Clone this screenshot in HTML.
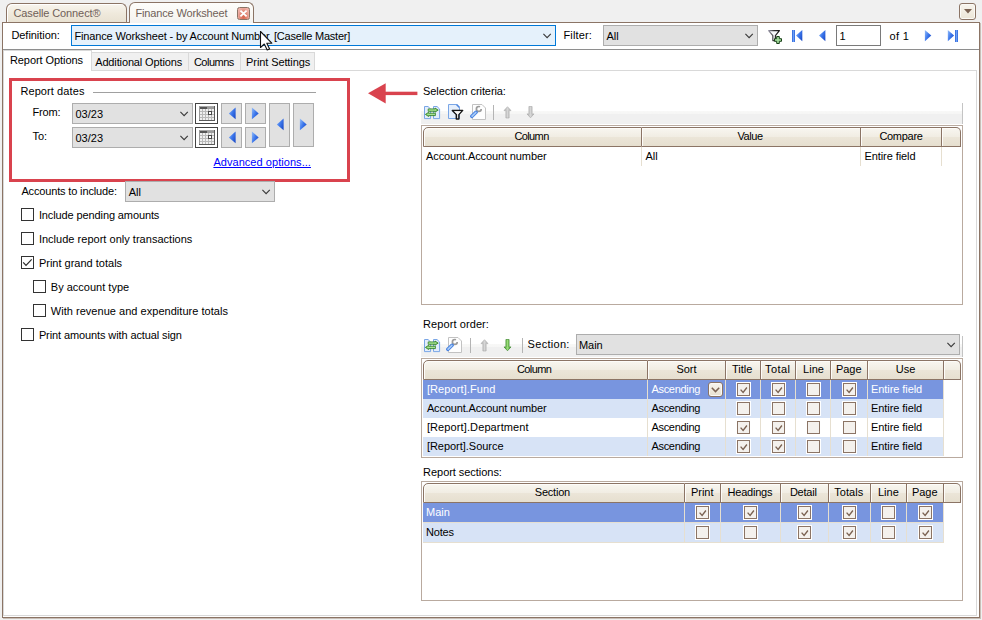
<!DOCTYPE html>
<html><head><meta charset="utf-8">
<style>
*{box-sizing:border-box;margin:0;padding:0}
html,body{width:982px;height:620px;overflow:hidden;background:#f0f0f0}
body{font-family:"Liberation Sans",sans-serif;font-size:11px;color:#000;position:relative}
.a{position:absolute}
.t{position:absolute;white-space:nowrap;line-height:13px;height:13px}
.combo{position:absolute;background:#e1e1e1;border:1px solid #adadad}
.cb{position:absolute;width:13px;height:13px;border:1px solid #333;background:#fff}
.btn{position:absolute;background:#e1e1e1;border:1px solid #adadad}
.tbl{position:absolute;border:1px solid #b9aa9f;background:#fff}
.hd{position:absolute;height:20px;border:1px solid #8b7465;border-left:none;background:linear-gradient(#f8f6f0,#f1ede3 48%,#ebe5d8 52%,#e6dfcf);box-shadow:inset 1px 1px 0 #fdfcf9}
.hd.first{border-left:1px solid #8b7465;border-top-left-radius:5px}
.hd.last{border-top-right-radius:5px}
.tcb{position:absolute;width:15px;height:15px;border:1px solid #fff;background:#8b7465;padding:1px}
.tcb i{display:block;width:11px;height:11px;background:#f4f1ed}
.tb{position:absolute;background:linear-gradient(#ffffff 0,#ffffff 36%,#f8f8f7 38%,#f6f6f5 52%,#f0f0f0 54%,#f0f0f0 100%)}
</style></head><body>
<div class="a" style="left:6px;top:3px;width:121px;height:20px;border:1px solid #8b7465;border-bottom:none;border-radius:6px 6px 0 0;background:linear-gradient(#f8f5ee,#efe9dc 50%,#e8e1d1);box-shadow:inset 1px 1px 0 #fff"></div>
<div class="t" style="left:13.4px;top:7px;letter-spacing:-0.109px;color:#6f6058">Caselle Connect®</div>
<div class="a" style="left:2px;top:22px;width:978px;height:596px;border:1px solid #8b7465;background:#fff"></div>
<div class="a" style="left:980px;top:23px;width:1px;height:596px;background:#c9bfb8"></div>
<div class="a" style="left:3px;top:618px;width:978px;height:1px;background:#c9bfb8"></div>
<div class="a" style="left:129px;top:2px;width:125px;height:21px;border:1px solid #8b7465;border-bottom:none;border-radius:6px 6px 0 0;background:linear-gradient(#fdfdfb,#f8f6f2 70%,#f2f2f1)"></div>
<div class="t" style="left:135.4px;top:7px;letter-spacing:-0.149px;color:#6f6058">Finance Worksheet</div>
<div class="a" style="left:237px;top:7px;width:13px;height:13px;border:1px solid #8b7465;border-radius:2.5px;background:radial-gradient(ellipse at 50% 85%,#d9664c 0,#e08a78 45%,#eeb0a6 75%)"><svg class="a" style="left:1px;top:1px" width="9" height="9" viewBox="0 0 9 9"><path d="M1.4 1.6L7.6 7.4M7.6 1.6L1.4 7.4" stroke="#fff" stroke-width="1.9"/></svg></div>
<div class="a" style="left:959px;top:3px;width:17px;height:17px;border:1px solid #8b7465;border-radius:3px;background:linear-gradient(#f8f5ee,#ebe5d7);box-shadow:inset 0 0 0 1px #fbfaf6"><svg class="a" style="left:4px;top:5px" width="8" height="5" viewBox="0 0 8 5"><polygon points="0,0 8,0 4,4.6" fill="#7a6252"/></svg></div>
<div class="t" style="left:11.4px;top:29px;letter-spacing:-0.042px;">Definition:</div>
<div class="combo" style="left:71px;top:25px;width:485px;height:21px;background:#e5f1fb;border:1px solid #0078d7"></div>
<div class="t" style="left:74.4px;top:30px;letter-spacing:-0.140px;">Finance Worksheet - by Account Number</div>
<div class="t" style="left:274.0px;top:30px;letter-spacing:-0.206px;">[Caselle Master]</div>
<svg class="a" style="left:543px;top:33px" width="9" height="7" viewBox="0 0 9 7"><path d="M0.4 0.9 L4.1 4.6 L7.8 0.9" fill="none" stroke="#3a3a3a" stroke-width="1.15"/></svg>
<div class="t" style="left:563.4px;top:29px;letter-spacing:0.167px;">Filter:</div>
<div class="combo" style="left:603px;top:25px;width:155px;height:21px;"></div>
<div class="t" style="left:606.4px;top:30px;">All</div>
<svg class="a" style="left:745px;top:33px" width="9" height="7" viewBox="0 0 9 7"><path d="M0.4 0.9 L4.1 4.6 L7.8 0.9" fill="none" stroke="#3a3a3a" stroke-width="1.15"/></svg>
<div class="a" style="left:3px;top:49px;width:976px;height:1px;background:#8e8e8e"></div>
<div class="a" style="left:836px;top:25px;width:45px;height:21px;border:1px solid #7a7a7a;background:#fff"></div>
<div class="t" style="left:839.4px;top:30px;">1</div>
<div class="t" style="left:889.4px;top:30px;letter-spacing:0.4px">of 1</div>
<svg class="a" style="left:819px;top:29px" width="8" height="14" viewBox="0 0 8 14"><defs><linearGradient id="g1" x1="0" y1="0.1" x2="1" y2="0.8"><stop offset="0" stop-color="#8fb9f8"/><stop offset="0.5" stop-color="#3d78ec"/><stop offset="1" stop-color="#1c4cc8"/></linearGradient></defs><polygon points="6.40,0.90 0.00,6.60 6.40,12.30" fill="url(#g1)"/></svg>
<svg class="a" style="left:924px;top:29px" width="9" height="14" viewBox="0 0 9 14"><defs><linearGradient id="g2" x1="0" y1="0.1" x2="1" y2="0.8"><stop offset="0" stop-color="#8fb9f8"/><stop offset="0.5" stop-color="#3d78ec"/><stop offset="1" stop-color="#1c4cc8"/></linearGradient></defs><polygon points="0.90,0.90 7.30,6.60 0.90,12.30" fill="url(#g2)"/></svg>
<svg class="a" style="left:796px;top:29px" width="8" height="14" viewBox="0 0 8 14"><defs><linearGradient id="g3" x1="0" y1="0.1" x2="1" y2="0.8"><stop offset="0" stop-color="#8fb9f8"/><stop offset="0.5" stop-color="#3d78ec"/><stop offset="1" stop-color="#1c4cc8"/></linearGradient></defs><polygon points="6.30,0.90 0.00,6.60 6.30,12.30" fill="url(#g3)"/></svg>
<div class="a" style="left:792px;top:30px;width:3px;height:12px;background:linear-gradient(90deg,#2a5fd8,#6aa0f5 50%,#2a5fd8)"></div>
<svg class="a" style="left:947px;top:29px" width="9" height="14" viewBox="0 0 9 14"><defs><linearGradient id="g4" x1="0" y1="0.1" x2="1" y2="0.8"><stop offset="0" stop-color="#8fb9f8"/><stop offset="0.5" stop-color="#3d78ec"/><stop offset="1" stop-color="#1c4cc8"/></linearGradient></defs><polygon points="0.80,0.90 7.10,6.60 0.80,12.30" fill="url(#g4)"/></svg>
<div class="a" style="left:955px;top:30px;width:3px;height:12px;background:linear-gradient(90deg,#2a5fd8,#6aa0f5 50%,#2a5fd8)"></div>
<svg class="a" style="left:767px;top:29px" width="17" height="17" viewBox="0 0 17 17"><defs><linearGradient id="fg" x1="0" y1="0" x2="1" y2="0"><stop offset="0" stop-color="#9a98a8"/><stop offset="0.5" stop-color="#333"/><stop offset="1" stop-color="#111"/></linearGradient></defs><path d="M1.6 1.6 H12.4 L8.4 6.6 V11.6 H5.8 V6.6 Z" fill="#f6f7fa" stroke="url(#fg)" stroke-width="1.2" stroke-linejoin="round"/><path d="M9.7 7.5 H12.3 V9.7 H14.5 V12.3 H12.3 V14.5 H9.7 V12.3 H7.5 V9.7 H9.7 Z" fill="#a3dc9c" stroke="#173f17" stroke-width="1"/></svg>
<div class="a" style="left:3px;top:70px;width:974px;height:546px;border:1px solid #d9d9d9;background:#fff"></div>
<div class="a" style="left:3px;top:50px;width:89px;height:21px;border:1px solid #d9d9d9;border-bottom:none;background:#fff"></div>
<div class="t" style="left:9.9px;top:54px;letter-spacing:-0.060px;">Report Options</div>
<div class="a" style="left:92px;top:52px;width:97px;height:18px;border:1px solid #d9d9d9;border-bottom:none;border-left:none;background:#f0f0f0"></div>
<div class="t" style="left:95.2px;top:56px;letter-spacing:-0.134px;">Additional Options</div>
<div class="a" style="left:189px;top:52px;width:52px;height:18px;border:1px solid #d9d9d9;border-bottom:none;border-left:none;background:#f0f0f0"></div>
<div class="t" style="left:193.9px;top:56px;letter-spacing:-0.501px;">Columns</div>
<div class="a" style="left:241px;top:52px;width:74px;height:18px;border:1px solid #d9d9d9;border-bottom:none;border-left:none;background:#f0f0f0"></div>
<div class="t" style="left:246.1px;top:56px;letter-spacing:-0.102px;">Print Settings</div>
<div class="a" style="left:9px;top:78px;width:341px;height:104px;border:3px solid #d9434e"></div>
<div class="t" style="left:20.4px;top:85px;letter-spacing:0.092px;">Report dates</div>
<div class="a" style="left:93px;top:92px;width:223px;height:1px;background:#a0a0a0"></div>
<div class="t" style="left:32.4px;top:106px;letter-spacing:-0.134px;">From:</div>
<div class="t" style="left:32.4px;top:130px;">To:</div>
<div class="combo" style="left:72px;top:103px;width:121px;height:21px;"></div>
<div class="t" style="left:75.4px;top:108px;letter-spacing:0.042px;">03/23</div>
<svg class="a" style="left:180px;top:111px" width="9" height="7" viewBox="0 0 9 7"><path d="M0.4 0.9 L4.1 4.6 L7.8 0.9" fill="none" stroke="#3a3a3a" stroke-width="1.15"/></svg>
<div class="combo" style="left:72px;top:127px;width:121px;height:21px;"></div>
<div class="t" style="left:75.4px;top:132px;letter-spacing:0.042px;">03/23</div>
<svg class="a" style="left:180px;top:135px" width="9" height="7" viewBox="0 0 9 7"><path d="M0.4 0.9 L4.1 4.6 L7.8 0.9" fill="none" stroke="#3a3a3a" stroke-width="1.15"/></svg>
<div class="a" style="left:195px;top:103px;width:23px;height:21px;border:1px solid #444;background:#fff"><svg class="a" style="left:3px;top:2px" width="16" height="15" viewBox="0 0 16 15" shape-rendering="crispEdges"><rect x="0" y="0" width="16" height="15" fill="#b9b9b9"/><rect x="0" y="0" width="16" height="1" fill="#a8a8a8"/><rect x="0" y="0" width="1" height="15" fill="#9a9a9a"/><rect x="1" y="1" width="7" height="2" fill="#555"/><rect x="8" y="1" width="7" height="2" fill="#9b9b9b"/><rect x="15" y="0" width="1" height="15" fill="#5a5a5a"/><rect x="0" y="14" width="16" height="1" fill="#5a5a5a"/><g fill="#efefef"><rect x="1" y="3" width="2" height="2"/><rect x="4" y="3" width="2" height="2"/><rect x="7" y="3" width="2" height="2"/><rect x="10" y="3" width="2" height="2"/><rect x="13" y="3" width="2" height="2"/><rect x="1" y="6" width="2" height="2"/><rect x="4" y="6" width="2" height="2"/><rect x="7" y="6" width="2" height="2"/><rect x="10" y="6" width="2" height="2"/><rect x="13" y="6" width="2" height="2"/><rect x="1" y="9" width="2" height="2"/><rect x="4" y="9" width="2" height="2"/><rect x="7" y="9" width="2" height="2"/><rect x="10" y="9" width="2" height="2"/><rect x="13" y="9" width="2" height="2"/><rect x="1" y="12" width="2" height="2"/><rect x="4" y="12" width="2" height="2"/><rect x="7" y="12" width="2" height="2"/><rect x="10" y="12" width="2" height="2"/><rect x="13" y="12" width="2" height="2"/></g><rect x="9" y="5" width="4" height="4" fill="#4a4a4a"/><rect x="10" y="6" width="2" height="2" fill="#fff"/></svg></div>
<div class="a" style="left:195px;top:127px;width:23px;height:21px;border:1px solid #444;background:#fff"><svg class="a" style="left:3px;top:2px" width="16" height="15" viewBox="0 0 16 15" shape-rendering="crispEdges"><rect x="0" y="0" width="16" height="15" fill="#b9b9b9"/><rect x="0" y="0" width="16" height="1" fill="#a8a8a8"/><rect x="0" y="0" width="1" height="15" fill="#9a9a9a"/><rect x="1" y="1" width="7" height="2" fill="#555"/><rect x="8" y="1" width="7" height="2" fill="#9b9b9b"/><rect x="15" y="0" width="1" height="15" fill="#5a5a5a"/><rect x="0" y="14" width="16" height="1" fill="#5a5a5a"/><g fill="#efefef"><rect x="1" y="3" width="2" height="2"/><rect x="4" y="3" width="2" height="2"/><rect x="7" y="3" width="2" height="2"/><rect x="10" y="3" width="2" height="2"/><rect x="13" y="3" width="2" height="2"/><rect x="1" y="6" width="2" height="2"/><rect x="4" y="6" width="2" height="2"/><rect x="7" y="6" width="2" height="2"/><rect x="10" y="6" width="2" height="2"/><rect x="13" y="6" width="2" height="2"/><rect x="1" y="9" width="2" height="2"/><rect x="4" y="9" width="2" height="2"/><rect x="7" y="9" width="2" height="2"/><rect x="10" y="9" width="2" height="2"/><rect x="13" y="9" width="2" height="2"/><rect x="1" y="12" width="2" height="2"/><rect x="4" y="12" width="2" height="2"/><rect x="7" y="12" width="2" height="2"/><rect x="10" y="12" width="2" height="2"/><rect x="13" y="12" width="2" height="2"/></g><rect x="9" y="5" width="4" height="4" fill="#4a4a4a"/><rect x="10" y="6" width="2" height="2" fill="#fff"/></svg></div>
<div class="btn" style="left:221px;top:103px;width:21px;height:21px"></div>
<svg class="a" style="left:228px;top:107px" width="9" height="14" viewBox="0 0 9 14"><defs><linearGradient id="g5" x1="0" y1="0.1" x2="1" y2="0.8"><stop offset="0" stop-color="#8fb9f8"/><stop offset="0.5" stop-color="#3d78ec"/><stop offset="1" stop-color="#1c4cc8"/></linearGradient></defs><polygon points="7.60,0.50 0.80,6.40 7.60,12.30" fill="url(#g5)"/></svg>
<div class="btn" style="left:245px;top:103px;width:21px;height:21px"></div>
<svg class="a" style="left:251px;top:107px" width="9" height="14" viewBox="0 0 9 14"><defs><linearGradient id="g6" x1="0" y1="0.1" x2="1" y2="0.8"><stop offset="0" stop-color="#8fb9f8"/><stop offset="0.5" stop-color="#3d78ec"/><stop offset="1" stop-color="#1c4cc8"/></linearGradient></defs><polygon points="0.90,0.50 7.70,6.40 0.90,12.30" fill="url(#g6)"/></svg>
<div class="btn" style="left:221px;top:127px;width:21px;height:21px"></div>
<svg class="a" style="left:228px;top:131px" width="9" height="14" viewBox="0 0 9 14"><defs><linearGradient id="g7" x1="0" y1="0.1" x2="1" y2="0.8"><stop offset="0" stop-color="#8fb9f8"/><stop offset="0.5" stop-color="#3d78ec"/><stop offset="1" stop-color="#1c4cc8"/></linearGradient></defs><polygon points="7.60,0.50 0.80,6.40 7.60,12.30" fill="url(#g7)"/></svg>
<div class="btn" style="left:245px;top:127px;width:21px;height:21px"></div>
<svg class="a" style="left:251px;top:131px" width="9" height="14" viewBox="0 0 9 14"><defs><linearGradient id="g8" x1="0" y1="0.1" x2="1" y2="0.8"><stop offset="0" stop-color="#8fb9f8"/><stop offset="0.5" stop-color="#3d78ec"/><stop offset="1" stop-color="#1c4cc8"/></linearGradient></defs><polygon points="0.90,0.50 7.70,6.40 0.90,12.30" fill="url(#g8)"/></svg>
<div class="btn" style="left:269px;top:103px;width:21px;height:44px"></div>
<svg class="a" style="left:276px;top:118px" width="9" height="14" viewBox="0 0 9 14"><defs><linearGradient id="g9" x1="0" y1="0.1" x2="1" y2="0.8"><stop offset="0" stop-color="#8fb9f8"/><stop offset="0.5" stop-color="#3d78ec"/><stop offset="1" stop-color="#1c4cc8"/></linearGradient></defs><polygon points="7.60,0.50 0.80,6.40 7.60,12.30" fill="url(#g9)"/></svg>
<div class="btn" style="left:293px;top:103px;width:21px;height:44px"></div>
<svg class="a" style="left:299px;top:118px" width="9" height="14" viewBox="0 0 9 14"><defs><linearGradient id="g10" x1="0" y1="0.1" x2="1" y2="0.8"><stop offset="0" stop-color="#8fb9f8"/><stop offset="0.5" stop-color="#3d78ec"/><stop offset="1" stop-color="#1c4cc8"/></linearGradient></defs><polygon points="0.90,0.50 7.70,6.40 0.90,12.30" fill="url(#g10)"/></svg>
<div class="t" style="left:213.4px;top:156px;letter-spacing:0.049px;color:#0000ff;text-decoration:underline">Advanced options...</div>
<svg class="a" style="left:367px;top:82px" width="53" height="24" viewBox="0 0 53 24"><polygon points="1,11.3 18.7,1.2 18.7,21.5" fill="#d9434e"/><rect x="18" y="9.7" width="32.4" height="3.4" fill="#d9434e"/></svg>
<div class="t" style="left:21.4px;top:185px;letter-spacing:-0.150px;">Accounts to include:</div>
<div class="combo" style="left:125px;top:181px;width:150px;height:21px;"></div>
<div class="t" style="left:128.7px;top:186px;">All</div>
<svg class="a" style="left:262px;top:189px" width="9" height="7" viewBox="0 0 9 7"><path d="M0.4 0.9 L4.1 4.6 L7.8 0.9" fill="none" stroke="#3a3a3a" stroke-width="1.15"/></svg>
<div class="cb" style="left:21px;top:208px"></div>
<div class="t" style="left:38.9px;top:209px;letter-spacing:-0.111px;">Include pending amounts</div>
<div class="cb" style="left:21px;top:232px"></div>
<div class="t" style="left:38.9px;top:233px;letter-spacing:0.020px;">Include report only transactions</div>
<div class="cb" style="left:21px;top:256px"><svg class="a" style="left:0;top:0" width="11" height="11" viewBox="0 0 11 11"><path d="M1.2 5.3 L4 8.3 L9.7 2.4" fill="none" stroke="#2a2a2a" stroke-width="1.2"/></svg></div>
<div class="t" style="left:38.9px;top:257px;letter-spacing:0.003px;">Print grand totals</div>
<div class="cb" style="left:33px;top:280px"></div>
<div class="t" style="left:50.8px;top:281px;letter-spacing:0.008px;">By account type</div>
<div class="cb" style="left:33px;top:304px"></div>
<div class="t" style="left:50.8px;top:305px;letter-spacing:0.029px;">With revenue and expenditure totals</div>
<div class="cb" style="left:21px;top:328px"></div>
<div class="t" style="left:38.9px;top:329px;letter-spacing:-0.108px;">Print amounts with actual sign</div>
<div class="t" style="left:423.1px;top:85px;letter-spacing:-0.087px;">Selection criteria:</div>
<div class="tb" style="left:421px;top:103px;width:542px;height:21px"></div>
<div class="a" style="left:962px;top:103px;width:1px;height:21px;background:#c4c4c4"></div>
<svg class="a" style="left:424px;top:106px" width="17" height="14" viewBox="0 0 17 14"><path d="M0.5 0.5 H4 L6.6 3 V12.6 H0.5 Z" fill="#e3edfb" stroke="#7aa6e6"/><path d="M9.5 0.5 H13 L15.6 3 V12.6 H9.5 Z" fill="#e3edfb" stroke="#7aa6e6"/><path d="M4.2 2.9 H11 V2 L14.2 4.1 L11 6.2 V5.3 H4.2 Z" fill="#7bcb63" stroke="#2f7a22" stroke-width="0.8" stroke-linejoin="round"/><path d="M4.6 4.1 H12.2" stroke="#c6efb4" stroke-width="0.7"/><path d="M11.4 7.2 H4.6 V6.3 L1.4 8.4 L4.6 10.5 V9.6 H11.4 Z" fill="#7bcb63" stroke="#2f7a22" stroke-width="0.8" stroke-linejoin="round"/><path d="M3.4 8.4 H11" stroke="#c6efb4" stroke-width="0.7"/></svg>
<svg class="a" style="left:448px;top:104px" width="16" height="16" viewBox="0 0 16 16"><path d="M0.5 0.5 H8.5 L11.5 3.5 V14.5 H0.5 Z" fill="#e6effb" stroke="#7aa6e6"/><path d="M8.5 0.5 L11.5 3.5" stroke="#4f86de" stroke-width="1.6"/><path d="M4.3 6.4 H14.7 L10.9 10.6 V15 H8.3 V10.6 Z" fill="#d9d9d9" stroke="#151515" stroke-width="1.4" stroke-linejoin="round"/><path d="M6.3 7.6 H12.6 L9.6 10.4 Z" fill="#fafafa"/></svg>
<svg class="a" style="left:470px;top:104px" width="17" height="16" viewBox="0 0 17 16"><path d="M2.5 0.5 H12 L15.5 4 V15.5 H2.5 Z" fill="#fefefe" stroke="#c2c2c2"/><path d="M7.4 6.8 L6.2 8.1" stroke="#a5a5a5" stroke-width="2.4"/><circle cx="8.8" cy="4.9" r="2.4" fill="none" stroke="#9c9c9c" stroke-width="1.7" stroke-dasharray="11.3 3.8"/><path d="M1.9 12.3 L6 8.3" stroke="#4a84e2" stroke-width="3.6" stroke-linecap="round"/><path d="M2.1 12.1 L5.8 8.5" stroke="#a9cbf6" stroke-width="1.7" stroke-linecap="round"/></svg>
<div class="a" style="left:493px;top:105px;width:1px;height:15px;background:#b4b4b4"></div>
<svg class="a" style="left:503px;top:106px" width="9" height="13" viewBox="0 0 9 13"><defs><linearGradient id="g11" x1="0" y1="0" x2="1" y2="0"><stop offset="0" stop-color="#b0b0b0"/><stop offset="0.5" stop-color="#d6d6d6"/><stop offset="1" stop-color="#b0b0b0"/></linearGradient></defs><path d="M4.5 0.7 L8 4.6 H6.1 V12 H2.9 V4.6 H1 Z" fill="url(#g11)" stroke="#a8a8a8" stroke-width="0.6"/></svg>
<svg class="a" style="left:526px;top:106px" width="9" height="13" viewBox="0 0 9 13"><defs><linearGradient id="g12" x1="0" y1="0" x2="1" y2="0"><stop offset="0" stop-color="#b0b0b0"/><stop offset="0.5" stop-color="#d6d6d6"/><stop offset="1" stop-color="#b0b0b0"/></linearGradient></defs><path d="M2.9 0.5 H6.1 V7.9 H8 L4.5 11.8 L1 7.9 H2.9 Z" fill="url(#g12)" stroke="#a8a8a8" stroke-width="0.6"/></svg>
<div class="tbl" style="left:421px;top:125px;width:542px;height:180px"></div>
<div class="hd first" style="left:423px;top:127px;width:219px"></div>
<div class="t" style="left:514.4px;top:130px;letter-spacing:-0.600px;">Column</div>
<div class="hd" style="left:642px;top:127px;width:219px"></div>
<div class="t" style="left:737.4px;top:130px;letter-spacing:-0.382px;">Value</div>
<div class="hd" style="left:861px;top:127px;width:81px"></div>
<div class="t" style="left:879.4px;top:130px;letter-spacing:-0.292px;">Compare</div>
<div class="hd last" style="left:942px;top:127px;width:19px"></div>
<div class="t" style="left:426.1px;top:150px;letter-spacing:-0.115px;">Account.Account number</div>
<div class="t" style="left:645.4px;top:150px;">All</div>
<div class="t" style="left:864.4px;top:150px;letter-spacing:-0.071px;">Entire field</div>
<div class="a" style="left:641px;top:147px;width:1px;height:19px;background:#e6dfd0"></div>
<div class="a" style="left:860px;top:147px;width:1px;height:19px;background:#e6dfd0"></div>
<div class="a" style="left:941px;top:147px;width:1px;height:19px;background:#e6dfd0"></div>
<div class="t" style="left:423.1px;top:318px;letter-spacing:0.082px;">Report order:</div>
<div class="tb" style="left:421px;top:336px;width:542px;height:21px"></div>
<div class="a" style="left:962px;top:336px;width:1px;height:21px;background:#c4c4c4"></div>
<svg class="a" style="left:424px;top:339px" width="17" height="14" viewBox="0 0 17 14"><path d="M0.5 0.5 H4 L6.6 3 V12.6 H0.5 Z" fill="#e3edfb" stroke="#7aa6e6"/><path d="M9.5 0.5 H13 L15.6 3 V12.6 H9.5 Z" fill="#e3edfb" stroke="#7aa6e6"/><path d="M4.2 2.9 H11 V2 L14.2 4.1 L11 6.2 V5.3 H4.2 Z" fill="#7bcb63" stroke="#2f7a22" stroke-width="0.8" stroke-linejoin="round"/><path d="M4.6 4.1 H12.2" stroke="#c6efb4" stroke-width="0.7"/><path d="M11.4 7.2 H4.6 V6.3 L1.4 8.4 L4.6 10.5 V9.6 H11.4 Z" fill="#7bcb63" stroke="#2f7a22" stroke-width="0.8" stroke-linejoin="round"/><path d="M3.4 8.4 H11" stroke="#c6efb4" stroke-width="0.7"/></svg>
<svg class="a" style="left:446px;top:337px" width="17" height="16" viewBox="0 0 17 16"><path d="M2.5 0.5 H12 L15.5 4 V15.5 H2.5 Z" fill="#fefefe" stroke="#c2c2c2"/><path d="M7.4 6.8 L6.2 8.1" stroke="#a5a5a5" stroke-width="2.4"/><circle cx="8.8" cy="4.9" r="2.4" fill="none" stroke="#9c9c9c" stroke-width="1.7" stroke-dasharray="11.3 3.8"/><path d="M1.9 12.3 L6 8.3" stroke="#4a84e2" stroke-width="3.6" stroke-linecap="round"/><path d="M2.1 12.1 L5.8 8.5" stroke="#a9cbf6" stroke-width="1.7" stroke-linecap="round"/></svg>
<div class="a" style="left:470px;top:338px;width:1px;height:15px;background:#b4b4b4"></div>
<svg class="a" style="left:480px;top:339px" width="9" height="13" viewBox="0 0 9 13"><defs><linearGradient id="g13" x1="0" y1="0" x2="1" y2="0"><stop offset="0" stop-color="#b0b0b0"/><stop offset="0.5" stop-color="#d6d6d6"/><stop offset="1" stop-color="#b0b0b0"/></linearGradient></defs><path d="M4.5 0.7 L8 4.6 H6.1 V12 H2.9 V4.6 H1 Z" fill="url(#g13)" stroke="#a8a8a8" stroke-width="0.6"/></svg>
<svg class="a" style="left:503px;top:339px" width="9" height="13" viewBox="0 0 9 13"><defs><linearGradient id="g14" x1="0" y1="0" x2="1" y2="0"><stop offset="0" stop-color="#43a12e"/><stop offset="0.5" stop-color="#9bdc7a"/><stop offset="1" stop-color="#43a12e"/></linearGradient></defs><path d="M2.9 0.5 H6.1 V7.9 H8 L4.5 11.8 L1 7.9 H2.9 Z" fill="url(#g14)" stroke="#2f7d20" stroke-width="0.6"/></svg>
<div class="a" style="left:522px;top:338px;width:1px;height:15px;background:#b4b4b4"></div>
<div class="t" style="left:527.6px;top:338px;letter-spacing:0.293px;">Section:</div>
<div class="combo" style="left:576px;top:334px;width:384px;height:21px;"></div>
<div class="t" style="left:578.9px;top:339px;">Main</div>
<svg class="a" style="left:947px;top:342px" width="9" height="7" viewBox="0 0 9 7"><path d="M0.4 0.9 L4.1 4.6 L7.8 0.9" fill="none" stroke="#3a3a3a" stroke-width="1.15"/></svg>
<div class="tbl" style="left:421px;top:358px;width:542px;height:100px"></div>
<div class="hd first" style="left:423px;top:360px;width:225px"></div>
<div class="t" style="left:516.9px;top:363px;letter-spacing:-0.581px;">Column</div>
<div class="hd" style="left:648px;top:360px;width:78px"></div>
<div class="t" style="left:676.4px;top:363px;">Sort</div>
<div class="hd" style="left:726px;top:360px;width:35px"></div>
<div class="t" style="left:731.9px;top:363px;letter-spacing:0.031px;">Title</div>
<div class="hd" style="left:761px;top:360px;width:35px"></div>
<div class="t" style="left:765.1px;top:363px;letter-spacing:0.387px;">Total</div>
<div class="hd" style="left:796px;top:360px;width:35px"></div>
<div class="t" style="left:803.1px;top:363px;">Line</div>
<div class="hd" style="left:831px;top:360px;width:37px"></div>
<div class="t" style="left:835.9px;top:363px;">Page</div>
<div class="hd" style="left:868px;top:360px;width:76px"></div>
<div class="t" style="left:895.8px;top:363px;">Use</div>
<div class="hd last" style="left:944px;top:360px;width:17px"></div>
<div class="a" style="left:423px;top:380px;width:520px;height:19px;background:#7895df"></div>
<div class="a" style="left:647px;top:380px;width:1px;height:19px;background:#e6dfd0"></div>
<div class="a" style="left:725px;top:380px;width:1px;height:19px;background:#e6dfd0"></div>
<div class="a" style="left:760px;top:380px;width:1px;height:19px;background:#e6dfd0"></div>
<div class="a" style="left:795px;top:380px;width:1px;height:19px;background:#e6dfd0"></div>
<div class="a" style="left:830px;top:380px;width:1px;height:19px;background:#e6dfd0"></div>
<div class="a" style="left:867px;top:380px;width:1px;height:19px;background:#e6dfd0"></div>
<div class="a" style="left:943px;top:380px;width:1px;height:19px;background:#e6dfd0"></div>
<div class="t" style="left:426.9px;top:383px;letter-spacing:0.103px;color:#fff">[Report].Fund</div>
<div class="t" style="left:651.4px;top:383px;letter-spacing:-0.297px;color:#fff">Ascending</div>
<div class="t" style="left:871.0px;top:383px;letter-spacing:-0.071px;color:#fff">Entire field</div>
<div class="tcb" style="left:736px;top:382px"><i></i><svg class="a" style="left:1px;top:1px" width="11" height="11" viewBox="0 0 11 11"><path d="M2.6 5.6 L5.1 8.4 L8.9 3.5" fill="none" stroke="#7a6252" stroke-width="1.35"/></svg></div>
<div class="tcb" style="left:771px;top:382px"><i></i><svg class="a" style="left:1px;top:1px" width="11" height="11" viewBox="0 0 11 11"><path d="M2.6 5.6 L5.1 8.4 L8.9 3.5" fill="none" stroke="#7a6252" stroke-width="1.35"/></svg></div>
<div class="tcb" style="left:806px;top:382px"><i></i></div>
<div class="tcb" style="left:842px;top:382px"><i></i><svg class="a" style="left:1px;top:1px" width="11" height="11" viewBox="0 0 11 11"><path d="M2.6 5.6 L5.1 8.4 L8.9 3.5" fill="none" stroke="#7a6252" stroke-width="1.35"/></svg></div>
<div class="a" style="left:423px;top:399px;width:520px;height:19px;background:#d7e3f6"></div>
<div class="a" style="left:647px;top:399px;width:1px;height:19px;background:#e6dfd0"></div>
<div class="a" style="left:725px;top:399px;width:1px;height:19px;background:#e6dfd0"></div>
<div class="a" style="left:760px;top:399px;width:1px;height:19px;background:#e6dfd0"></div>
<div class="a" style="left:795px;top:399px;width:1px;height:19px;background:#e6dfd0"></div>
<div class="a" style="left:830px;top:399px;width:1px;height:19px;background:#e6dfd0"></div>
<div class="a" style="left:867px;top:399px;width:1px;height:19px;background:#e6dfd0"></div>
<div class="a" style="left:943px;top:399px;width:1px;height:19px;background:#e6dfd0"></div>
<div class="t" style="left:426.9px;top:402px;letter-spacing:-0.153px;color:#000">Account.Account number</div>
<div class="t" style="left:651.4px;top:402px;letter-spacing:-0.297px;color:#000">Ascending</div>
<div class="t" style="left:871.0px;top:402px;letter-spacing:-0.071px;color:#000">Entire field</div>
<div class="tcb" style="left:736px;top:401px"><i></i></div>
<div class="tcb" style="left:771px;top:401px"><i></i></div>
<div class="tcb" style="left:806px;top:401px"><i></i></div>
<div class="tcb" style="left:842px;top:401px"><i></i></div>
<div class="a" style="left:423px;top:418px;width:520px;height:19px;background:#ffffff"></div>
<div class="a" style="left:647px;top:418px;width:1px;height:19px;background:#e6dfd0"></div>
<div class="a" style="left:725px;top:418px;width:1px;height:19px;background:#e6dfd0"></div>
<div class="a" style="left:760px;top:418px;width:1px;height:19px;background:#e6dfd0"></div>
<div class="a" style="left:795px;top:418px;width:1px;height:19px;background:#e6dfd0"></div>
<div class="a" style="left:830px;top:418px;width:1px;height:19px;background:#e6dfd0"></div>
<div class="a" style="left:867px;top:418px;width:1px;height:19px;background:#e6dfd0"></div>
<div class="a" style="left:943px;top:418px;width:1px;height:19px;background:#e6dfd0"></div>
<div class="t" style="left:426.9px;top:421px;letter-spacing:0.114px;color:#000">[Report].Department</div>
<div class="t" style="left:651.4px;top:421px;letter-spacing:-0.297px;color:#000">Ascending</div>
<div class="t" style="left:871.0px;top:421px;letter-spacing:-0.071px;color:#000">Entire field</div>
<div class="tcb" style="left:736px;top:420px"><i></i><svg class="a" style="left:1px;top:1px" width="11" height="11" viewBox="0 0 11 11"><path d="M2.6 5.6 L5.1 8.4 L8.9 3.5" fill="none" stroke="#7a6252" stroke-width="1.35"/></svg></div>
<div class="tcb" style="left:771px;top:420px"><i></i><svg class="a" style="left:1px;top:1px" width="11" height="11" viewBox="0 0 11 11"><path d="M2.6 5.6 L5.1 8.4 L8.9 3.5" fill="none" stroke="#7a6252" stroke-width="1.35"/></svg></div>
<div class="tcb" style="left:806px;top:420px"><i></i></div>
<div class="tcb" style="left:842px;top:420px"><i></i></div>
<div class="a" style="left:423px;top:437px;width:520px;height:19px;background:#d7e3f6"></div>
<div class="a" style="left:647px;top:437px;width:1px;height:19px;background:#e6dfd0"></div>
<div class="a" style="left:725px;top:437px;width:1px;height:19px;background:#e6dfd0"></div>
<div class="a" style="left:760px;top:437px;width:1px;height:19px;background:#e6dfd0"></div>
<div class="a" style="left:795px;top:437px;width:1px;height:19px;background:#e6dfd0"></div>
<div class="a" style="left:830px;top:437px;width:1px;height:19px;background:#e6dfd0"></div>
<div class="a" style="left:867px;top:437px;width:1px;height:19px;background:#e6dfd0"></div>
<div class="a" style="left:943px;top:437px;width:1px;height:19px;background:#e6dfd0"></div>
<div class="t" style="left:426.9px;top:440px;letter-spacing:-0.025px;color:#000">[Report].Source</div>
<div class="t" style="left:651.4px;top:440px;letter-spacing:-0.297px;color:#000">Ascending</div>
<div class="t" style="left:871.0px;top:440px;letter-spacing:-0.071px;color:#000">Entire field</div>
<div class="tcb" style="left:736px;top:439px"><i></i><svg class="a" style="left:1px;top:1px" width="11" height="11" viewBox="0 0 11 11"><path d="M2.6 5.6 L5.1 8.4 L8.9 3.5" fill="none" stroke="#7a6252" stroke-width="1.35"/></svg></div>
<div class="tcb" style="left:771px;top:439px"><i></i><svg class="a" style="left:1px;top:1px" width="11" height="11" viewBox="0 0 11 11"><path d="M2.6 5.6 L5.1 8.4 L8.9 3.5" fill="none" stroke="#7a6252" stroke-width="1.35"/></svg></div>
<div class="tcb" style="left:806px;top:439px"><i></i></div>
<div class="tcb" style="left:842px;top:439px"><i></i></div>
<div class="a" style="left:708px;top:382px;width:15px;height:15px;border:1px solid #8b7465;border-radius:3px;background:linear-gradient(#f8f5ee,#e8e1d0);box-shadow:inset 0 0 0 1px #fbfaf6"><svg class="a" style="left:2px;top:4px" width="9" height="6" viewBox="0 0 9 6"><path d="M0.8 0.8L4.5 4.6L8.2 0.8" fill="none" stroke="#7a6252" stroke-width="1.5"/></svg></div>
<div class="t" style="left:423.1px;top:466px;letter-spacing:-0.046px;">Report sections:</div>
<div class="tbl" style="left:421px;top:481px;width:542px;height:120px"></div>
<div class="hd first" style="left:423px;top:483px;width:262px"></div>
<div class="t" style="left:534.8px;top:486px;letter-spacing:-0.217px;">Section</div>
<div class="hd" style="left:685px;top:483px;width:36px"></div>
<div class="t" style="left:690.9px;top:486px;letter-spacing:-0.006px;">Print</div>
<div class="hd" style="left:721px;top:483px;width:60px"></div>
<div class="t" style="left:727.6px;top:486px;letter-spacing:-0.241px;">Headings</div>
<div class="hd" style="left:781px;top:483px;width:48px"></div>
<div class="t" style="left:789.9px;top:486px;letter-spacing:-0.225px;">Detail</div>
<div class="hd" style="left:829px;top:483px;width:42px"></div>
<div class="t" style="left:834.2px;top:486px;letter-spacing:0.050px;">Totals</div>
<div class="hd" style="left:871px;top:483px;width:36px"></div>
<div class="t" style="left:878.0px;top:486px;">Line</div>
<div class="hd" style="left:907px;top:483px;width:37px"></div>
<div class="t" style="left:911.9px;top:486px;">Page</div>
<div class="hd last" style="left:944px;top:483px;width:17px"></div>
<div class="a" style="left:423px;top:503px;width:520px;height:19px;background:#7895df"></div>
<div class="a" style="left:423px;top:522px;width:521px;height:1px;background:#e6dfd0"></div>
<div class="a" style="left:684px;top:503px;width:1px;height:20px;background:#e6dfd0"></div>
<div class="a" style="left:720px;top:503px;width:1px;height:20px;background:#e6dfd0"></div>
<div class="a" style="left:780px;top:503px;width:1px;height:20px;background:#e6dfd0"></div>
<div class="a" style="left:828px;top:503px;width:1px;height:20px;background:#e6dfd0"></div>
<div class="a" style="left:870px;top:503px;width:1px;height:20px;background:#e6dfd0"></div>
<div class="a" style="left:906px;top:503px;width:1px;height:20px;background:#e6dfd0"></div>
<div class="a" style="left:943px;top:503px;width:1px;height:20px;background:#e6dfd0"></div>
<div class="t" style="left:426.0px;top:506px;color:#fff">Main</div>
<div class="tcb" style="left:695px;top:505px"><i></i><svg class="a" style="left:1px;top:1px" width="11" height="11" viewBox="0 0 11 11"><path d="M2.6 5.6 L5.1 8.4 L8.9 3.5" fill="none" stroke="#7a6252" stroke-width="1.35"/></svg></div>
<div class="tcb" style="left:743px;top:505px"><i></i><svg class="a" style="left:1px;top:1px" width="11" height="11" viewBox="0 0 11 11"><path d="M2.6 5.6 L5.1 8.4 L8.9 3.5" fill="none" stroke="#7a6252" stroke-width="1.35"/></svg></div>
<div class="tcb" style="left:797px;top:505px"><i></i><svg class="a" style="left:1px;top:1px" width="11" height="11" viewBox="0 0 11 11"><path d="M2.6 5.6 L5.1 8.4 L8.9 3.5" fill="none" stroke="#7a6252" stroke-width="1.35"/></svg></div>
<div class="tcb" style="left:842px;top:505px"><i></i><svg class="a" style="left:1px;top:1px" width="11" height="11" viewBox="0 0 11 11"><path d="M2.6 5.6 L5.1 8.4 L8.9 3.5" fill="none" stroke="#7a6252" stroke-width="1.35"/></svg></div>
<div class="tcb" style="left:881px;top:505px"><i></i></div>
<div class="tcb" style="left:918px;top:505px"><i></i><svg class="a" style="left:1px;top:1px" width="11" height="11" viewBox="0 0 11 11"><path d="M2.6 5.6 L5.1 8.4 L8.9 3.5" fill="none" stroke="#7a6252" stroke-width="1.35"/></svg></div>
<div class="a" style="left:423px;top:523px;width:520px;height:19px;background:#d7e3f6"></div>
<div class="a" style="left:423px;top:542px;width:521px;height:1px;background:#e6dfd0"></div>
<div class="a" style="left:684px;top:523px;width:1px;height:20px;background:#e6dfd0"></div>
<div class="a" style="left:720px;top:523px;width:1px;height:20px;background:#e6dfd0"></div>
<div class="a" style="left:780px;top:523px;width:1px;height:20px;background:#e6dfd0"></div>
<div class="a" style="left:828px;top:523px;width:1px;height:20px;background:#e6dfd0"></div>
<div class="a" style="left:870px;top:523px;width:1px;height:20px;background:#e6dfd0"></div>
<div class="a" style="left:906px;top:523px;width:1px;height:20px;background:#e6dfd0"></div>
<div class="a" style="left:943px;top:523px;width:1px;height:20px;background:#e6dfd0"></div>
<div class="t" style="left:426.0px;top:526px;letter-spacing:-0.213px;color:#000">Notes</div>
<div class="tcb" style="left:695px;top:525px"><i></i></div>
<div class="tcb" style="left:743px;top:525px"><i></i></div>
<div class="tcb" style="left:797px;top:525px"><i></i><svg class="a" style="left:1px;top:1px" width="11" height="11" viewBox="0 0 11 11"><path d="M2.6 5.6 L5.1 8.4 L8.9 3.5" fill="none" stroke="#7a6252" stroke-width="1.35"/></svg></div>
<div class="tcb" style="left:842px;top:525px"><i></i><svg class="a" style="left:1px;top:1px" width="11" height="11" viewBox="0 0 11 11"><path d="M2.6 5.6 L5.1 8.4 L8.9 3.5" fill="none" stroke="#7a6252" stroke-width="1.35"/></svg></div>
<div class="tcb" style="left:881px;top:525px"><i></i></div>
<div class="tcb" style="left:918px;top:525px"><i></i><svg class="a" style="left:1px;top:1px" width="11" height="11" viewBox="0 0 11 11"><path d="M2.6 5.6 L5.1 8.4 L8.9 3.5" fill="none" stroke="#7a6252" stroke-width="1.35"/></svg></div>
<svg class="a" style="left:259px;top:30px" width="14" height="21" viewBox="0 0 14 21"><path d="M1.5 1.5 V17.5 L5.3 14 L8.2 20 L10.6 19 L7.8 13.2 H12.8 Z" fill="#fff" stroke="#111" stroke-width="1.1" stroke-linejoin="round"/></svg>
</body></html>
